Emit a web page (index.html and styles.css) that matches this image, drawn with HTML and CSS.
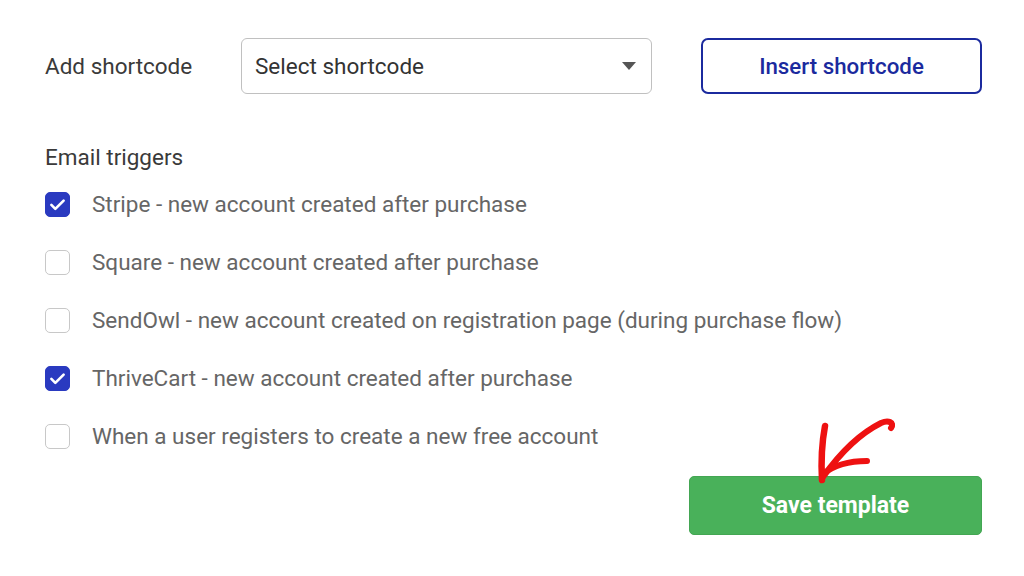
FILE: index.html
```html
<!DOCTYPE html>
<html>
<head>
<meta charset="utf-8">
<link rel="stylesheet" href="styles.css">
</head>
<body>
<main class="page">
  <div class="shortcode-row">
    <span class="row-label">Add shortcode</span>
    <div class="select">
      <span class="select-text">Select shortcode</span>
      <span class="caret"></span>
    </div>
    <button class="btn-outline">Insert shortcode</button>
  </div>

  <h2 class="section-title">Email triggers</h2>
  <ul class="triggers">
    <li class="trigger"><span class="box checked"><svg viewBox="0 0 24 24" width="21" height="21"><path d="M5 12.5l4.5 4.5L19 7.5" fill="none" stroke="#fff" stroke-width="3" stroke-linecap="round" stroke-linejoin="round"/></svg></span><span>Stripe - new account created after purchase</span></li>
    <li class="trigger"><span class="box"></span><span>Square - new account created after purchase</span></li>
    <li class="trigger"><span class="box"></span><span>SendOwl - new account created on registration page (during purchase flow)</span></li>
    <li class="trigger"><span class="box checked"><svg viewBox="0 0 24 24" width="21" height="21"><path d="M5 12.5l4.5 4.5L19 7.5" fill="none" stroke="#fff" stroke-width="3" stroke-linecap="round" stroke-linejoin="round"/></svg></span><span>ThriveCart - new account created after purchase</span></li>
    <li class="trigger"><span class="box"></span><span>When a user registers to create a new free account</span></li>
  </ul>

  <div class="actions">
    <button class="btn-save">Save template</button>
    <svg class="annot" viewBox="0 0 100 80" width="100" height="80">
      <path d="M80 14 C 84 8, 77 6, 70 9 C 52 18, 32 35, 12 63" fill="none" stroke="#ee1111" stroke-width="6" stroke-linecap="round"/>
      <path d="M14 12 C 11 28, 10 48, 11 66" fill="none" stroke="#ee1111" stroke-width="6.5" stroke-linecap="round"/>
      <path d="M12 60 C 22 52, 36 47, 56 47" fill="none" stroke="#ee1111" stroke-width="6" stroke-linecap="round"/>
    </svg>
  </div>
</main>
</body>
</html>
```

FILE: styles.css
```css
html, body {
  margin: 0;
  padding: 0;
  background: #ffffff;
}
body {
  font-family: Roboto, "Liberation Sans", Arial, sans-serif;
  width: 1024px;
  height: 576px;
  overflow: hidden;
}
.page {
  padding: 38px 0 0 45px;
  width: 937px;
  display: flex;
  flex-direction: column;
}
.shortcode-row {
  display: flex;
  align-items: center;
  height: 56px;
}
.row-label {
  width: 196px;
  font-size: 22.5px;
  color: #3a3a3a;
}
.select {
  width: 411px;
  height: 56px;
  box-sizing: border-box;
  border: 1.5px solid #c0c0c0;
  border-radius: 6px;
  display: flex;
  align-items: center;
  justify-content: space-between;
  padding: 0 14px 0 13px;
}
.select-text {
  font-size: 22.5px;
  color: #333;
}
.caret {
  width: 0;
  height: 0;
  border-left: 7px solid transparent;
  border-right: 7px solid transparent;
  border-top: 8px solid #555;
  margin-right: 1px;
}
.btn-outline {
  margin-left: 49px;
  width: 281px;
  height: 56px;
  box-sizing: border-box;
  background: #fff;
  border: 2px solid #1b2a9e;
  border-radius: 7px;
  color: #1b2a9e;
  font-family: inherit;
  font-size: 22.3px;
  font-weight: 500;
  padding: 0;
}
.section-title {
  margin: 51px 0 0 0;
  font-size: 22.5px;
  line-height: 24px;
  font-weight: 400;
  color: #3a3a3a;
}
.triggers {
  list-style: none;
  margin: 6px 0 0 0;
  padding: 0;
}
.trigger {
  height: 58px;
  display: flex;
  align-items: center;
  font-size: 22.5px;
  color: #666;
}
.box {
  width: 25px;
  height: 25px;
  box-sizing: border-box;
  border: 1.5px solid #c8c8c8;
  border-radius: 5px;
  margin-right: 22px;
  display: flex;
  align-items: center;
  justify-content: center;
  flex: none;
}
.box.checked {
  background: #2a3ac0;
  border-color: #2a3ac0;
}
.actions {
  position: relative;
  display: flex;
  justify-content: flex-end;
  margin-top: 11px;
}
.btn-save {
  width: 293px;
  height: 59px;
  background: #49b15a;
  border: 1px solid #43a653;
  border-radius: 5px;
  color: #fff;
  font-family: inherit;
  font-size: 23px;
  font-weight: 700;
  padding: 0;
}
.annot {
  position: absolute;
  left: 766px;
  top: -62px;
}
```
